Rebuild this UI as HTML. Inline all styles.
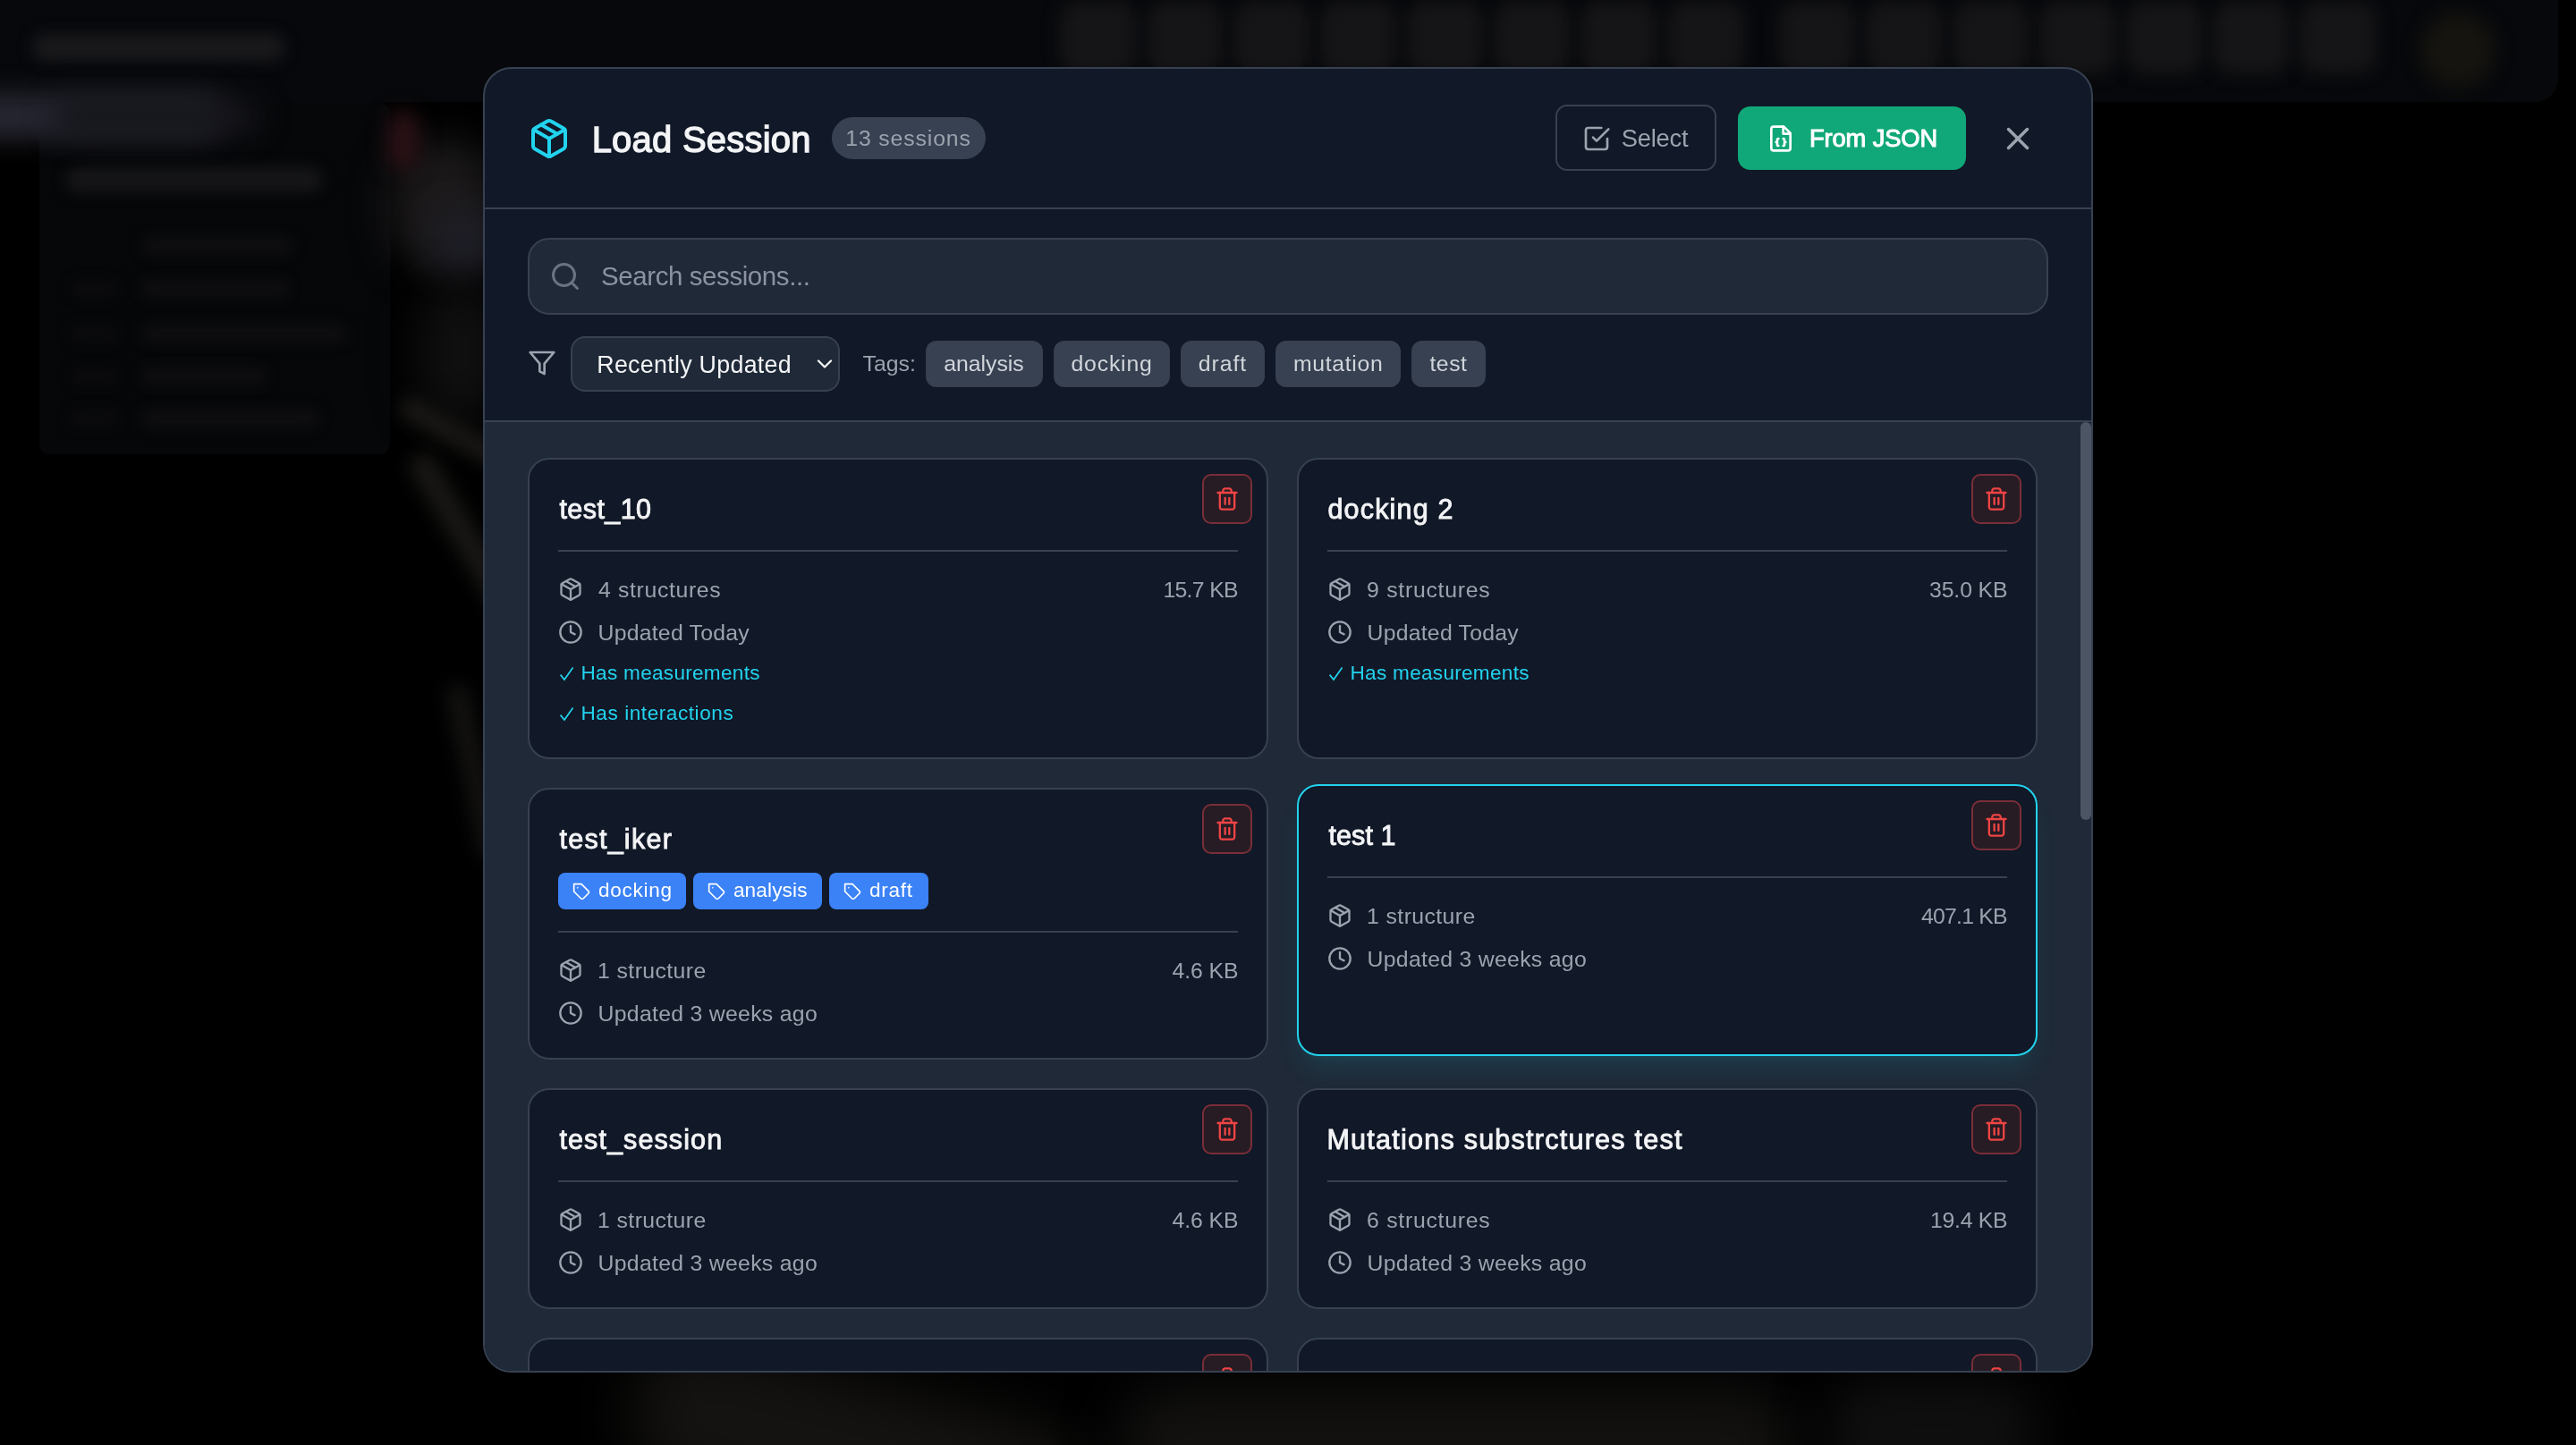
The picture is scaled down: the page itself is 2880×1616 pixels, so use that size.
<!DOCTYPE html><html lang="en"><head><meta charset="utf-8"><title>Load Session</title><style>
*{box-sizing:border-box;margin:0;padding:0}
html,body{width:100%;height:100%;background:#000;overflow:hidden}
body{position:relative;font-family:"Liberation Sans",sans-serif;-webkit-font-smoothing:antialiased}
#stage{position:absolute;left:0;top:0;width:2880px;height:1616px;overflow:hidden;background:#000;transform-origin:0 0;transform:scale(var(--s,1));opacity:.9999}
.t{position:absolute;white-space:pre;line-height:1;font-family:"Liberation Sans",sans-serif}
.ic{position:absolute;display:block;overflow:visible}
.bg{position:absolute;left:0;top:0;width:2880px;height:1616px;overflow:hidden}
.bg div{position:absolute}
.modal{position:absolute;left:540px;top:75px;width:1800px;height:1460px;border:2px solid #374151;border-radius:32px;background:#111827;overflow:hidden}
.hline{position:absolute;left:0;width:1796px;height:2px;background:#374151}
.badge{position:absolute;background:#374151;border-radius:24px}
.btn-select{position:absolute;border:2px solid #374151;border-radius:13px}
.btn-json{position:absolute;background:#10a878;border-radius:14px}
.search{position:absolute;background:#1f2937;border:2px solid #374151;border-radius:24px}
.select{position:absolute;background:#1f2937;border:2px solid #374151;border-radius:16px}
.ftag{position:absolute;background:#374151;border-radius:12px;height:52px;top:304px}
.list{position:absolute;left:0;top:395px;width:1796px;height:1061px;background:#1f2937;overflow:hidden}
.card{position:absolute;width:828px;border:2px solid #374151;border-radius:24px;background:#111827}
.card.sel{border-color:#22d3ee;box-shadow:0 20px 30px -6px rgba(34,211,238,.1),0 8px 12px -8px rgba(34,211,238,.1)}
.card .hr{position:absolute;left:32px;width:760px;height:2px;background:#374151}
.del{position:absolute;width:56px;height:56px;border:2px solid #7a2e38;border-radius:10px;background:#271c24}
.chip{position:absolute;height:41px;background:#3b82f6;border-radius:8px}
.thumb{position:absolute;left:1784px;top:395px;width:12px;height:445px;border-radius:6px;background:#4b5563}
</style></head><body><div id="stage"><div class="bg"><div style="left:0px;top:0px;width:2860px;height:114px;background:#07080b;border-radius:0 0 26px 0"></div><div style="left:1185px;top:2px;width:86px;height:80px;background:#151517;border-radius:20px;filter:blur(9px)"></div><div style="left:1282px;top:2px;width:86px;height:80px;background:#151517;border-radius:20px;filter:blur(9px)"></div><div style="left:1379px;top:2px;width:86px;height:80px;background:#151517;border-radius:20px;filter:blur(9px)"></div><div style="left:1476px;top:2px;width:86px;height:80px;background:#151517;border-radius:20px;filter:blur(9px)"></div><div style="left:1573px;top:2px;width:86px;height:80px;background:#151517;border-radius:20px;filter:blur(9px)"></div><div style="left:1670px;top:2px;width:86px;height:80px;background:#151517;border-radius:20px;filter:blur(9px)"></div><div style="left:1767px;top:2px;width:86px;height:80px;background:#151517;border-radius:20px;filter:blur(9px)"></div><div style="left:1864px;top:2px;width:86px;height:80px;background:#151517;border-radius:20px;filter:blur(9px)"></div><div style="left:1989px;top:2px;width:86px;height:80px;background:#151517;border-radius:20px;filter:blur(9px)"></div><div style="left:2086px;top:2px;width:86px;height:80px;background:#151517;border-radius:20px;filter:blur(9px)"></div><div style="left:2183px;top:2px;width:86px;height:80px;background:#151517;border-radius:20px;filter:blur(9px)"></div><div style="left:2280px;top:2px;width:86px;height:80px;background:#151517;border-radius:20px;filter:blur(9px)"></div><div style="left:2377px;top:2px;width:86px;height:80px;background:#151517;border-radius:20px;filter:blur(9px)"></div><div style="left:2474px;top:2px;width:86px;height:80px;background:#151517;border-radius:20px;filter:blur(9px)"></div><div style="left:2571px;top:2px;width:86px;height:80px;background:#151517;border-radius:20px;filter:blur(9px)"></div><div style="left:2706px;top:14px;width:84px;height:84px;background:#15140f;border-radius:42px;filter:blur(10px)"></div><div style="left:36px;top:38px;width:282px;height:30px;background:#19191c;border-radius:15px;filter:blur(8px)"></div><div style="left:44px;top:114px;width:392px;height:394px;background:#060709;border-radius:12px"></div><div style="left:-80px;top:104px;width:330px;height:52px;background:#262631;border-radius:26px;filter:blur(14px)"></div><div style="left:60px;top:108px;width:230px;height:44px;background:#15151b;border-radius:22px;filter:blur(16px)"></div><div style="left:74px;top:188px;width:286px;height:26px;background:#17171a;border-radius:13px;filter:blur(8px)"></div><div style="left:158px;top:265px;width:170px;height:20px;background:#0e0e10;border-radius:10px;filter:blur(7px)"></div><div style="left:158px;top:313px;width:165px;height:20px;background:#0e0e10;border-radius:10px;filter:blur(7px)"></div><div style="left:78px;top:314px;width:54px;height:18px;background:#0b0b0d;border-radius:9px;filter:blur(7px)"></div><div style="left:158px;top:363px;width:230px;height:20px;background:#0e0e10;border-radius:10px;filter:blur(7px)"></div><div style="left:78px;top:364px;width:54px;height:18px;background:#0b0b0d;border-radius:9px;filter:blur(7px)"></div><div style="left:158px;top:411px;width:140px;height:20px;background:#0e0e10;border-radius:10px;filter:blur(7px)"></div><div style="left:78px;top:412px;width:54px;height:18px;background:#0b0b0d;border-radius:9px;filter:blur(7px)"></div><div style="left:158px;top:458px;width:200px;height:20px;background:#0e0e10;border-radius:10px;filter:blur(7px)"></div><div style="left:78px;top:459px;width:54px;height:18px;background:#0b0b0d;border-radius:9px;filter:blur(7px)"></div><div style="left:436px;top:156px;width:120px;height:150px;background:#1b191a;border-radius:60px;filter:blur(22px)"></div><div style="left:434px;top:124px;width:34px;height:66px;background:#2c1217;border-radius:17px;filter:blur(11px)"></div><div style="left:486px;top:236px;width:70px;height:70px;background:#20202a;border-radius:35px;filter:blur(20px)"></div><div style="left:470px;top:320px;width:90px;height:150px;background:#111011;border-radius:45px;filter:blur(26px)"></div><div style="left:440px;top:470px;width:130px;height:26px;background:#171614;border-radius:13px;filter:blur(9px);transform:rotate(30deg)"></div><div style="left:400px;top:610px;width:270px;height:30px;background:#181715;border-radius:15px;filter:blur(10px);transform:rotate(59deg)"></div><div style="left:430px;top:850px;width:200px;height:26px;background:#131211;border-radius:13px;filter:blur(10px);transform:rotate(78deg)"></div><div style="left:700px;top:1545px;width:520px;height:160px;background:#141311;border-radius:80px;filter:blur(34px);transform:rotate(14deg)"></div><div style="left:1250px;top:1550px;width:760px;height:130px;background:#121110;border-radius:65px;filter:blur(30px)"></div><div style="left:2040px;top:1545px;width:240px;height:110px;background:#100f0f;border-radius:55px;filter:blur(28px)"></div></div><div class="modal"><svg class="ic" style="left:48px;top:53.5px;color:#22d3ee" width="48" height="48" viewBox="0 0 24 24" fill="none" stroke="currentColor" stroke-width="2" stroke-linecap="round" stroke-linejoin="round"><path d="m7.5 4.27 9 5.15"/><path d="M21 8a2 2 0 0 0-1-1.73l-7-4a2 2 0 0 0-2 0l-7 4A2 2 0 0 0 3 8v8a2 2 0 0 0 1 1.73l7 4a2 2 0 0 0 2 0l7-4A2 2 0 0 0 21 16Z"/><path d="m3.3 7 8.7 5 8.7-5"/><path d="M12 22V12"/></svg><span class="t" style="left:119.65px;top:59.44px;font-size:40px;color:#f3f4f6;-webkit-text-stroke:1.3px #f3f4f6;letter-spacing:0.231px">Load Session</span><div class="badge" style="left:388px;top:54px;width:172px;height:47px"></div><span class="t" style="left:403.25px;top:65.71px;font-size:24.8px;color:#9ca3af;letter-spacing:0.870px">13 sessions</span><div class="btn-select" style="left:1197px;top:40px;width:180px;height:74px"></div><svg class="ic" style="left:1226.6px;top:61.599999999999994px;color:#9ca3af" width="32" height="32" viewBox="0 0 24 24" fill="none" stroke="currentColor" stroke-width="2" stroke-linecap="round" stroke-linejoin="round"><path d="m9 11 3 3L22 4"/><path d="M21 12v7a2 2 0 0 1-2 2H5a2 2 0 0 1-2-2V5a2 2 0 0 1 2-2h11"/></svg><span class="t" style="left:1270.75px;top:64.14px;font-size:27.3px;color:#9ca3af;letter-spacing:-0.206px">Select</span><div class="btn-json" style="left:1401px;top:42px;width:255px;height:71px"></div><svg class="ic" style="left:1432.75px;top:61.69999999999999px;color:#fff" width="32" height="32" viewBox="0 0 24 24" fill="none" stroke="currentColor" stroke-width="2" stroke-linecap="round" stroke-linejoin="round"><path d="M14.5 2H6a2 2 0 0 0-2 2v16a2 2 0 0 0 2 2h12a2 2 0 0 0 2-2V7.5L14.5 2z"/><polyline points="14 2 14 8 20 8"/><path d="M10 12a1 1 0 0 0-1 1v1a1 1 0 0 1-1 1 1 1 0 0 1 1 1v1a1 1 0 0 0 1 1"/><path d="M14 18a1 1 0 0 0 1-1v-1a1 1 0 0 1 1-1 1 1 0 0 1-1-1v-1a1 1 0 0 0-1-1"/></svg><span class="t" style="left:1481.00px;top:64.14px;font-size:27.3px;color:#fff;-webkit-text-stroke:1.0px #fff;letter-spacing:-0.107px">From JSON</span><svg class="ic" style="left:1693px;top:57px;color:#9ca3af" width="42" height="42" viewBox="0 0 24 24" fill="none" stroke="currentColor" stroke-width="2" stroke-linecap="round" stroke-linejoin="round"><path d="M18 6 6 18"/><path d="m6 6 12 12"/></svg><div class="hline" style="top:155px"></div><div class="search" style="left:48px;top:189px;width:1700px;height:86px"></div><svg class="ic" style="left:72px;top:213.75px;color:#6b7280" width="36" height="36" viewBox="0 0 24 24" fill="none" stroke="currentColor" stroke-width="2" stroke-linecap="round" stroke-linejoin="round"><circle cx="11" cy="11" r="8"/><path d="m21 21-4.3-4.3"/></svg><span class="t" style="left:130.00px;top:216.78px;font-size:29.5px;color:#8b92a0;letter-spacing:-0.417px">Search sessions...</span><svg class="ic" style="left:48px;top:313px;color:#9ca3af" width="32" height="32" viewBox="0 0 24 24" fill="none" stroke="currentColor" stroke-width="2" stroke-linecap="round" stroke-linejoin="round"><polygon points="22 3 2 3 10 12.46 10 19 14 21 14 12.46 22 3"/></svg><div class="select" style="left:96px;top:299px;width:301px;height:62px"></div><span class="t" style="left:125.25px;top:317.61px;font-size:26.8px;color:#f3f4f6;letter-spacing:0.293px">Recently Updated</span><svg class="ic" style="left:365.9px;top:316.25px;color:#f3f4f6" width="28" height="28" viewBox="0 0 24 24" fill="none" stroke="currentColor" stroke-width="2" stroke-linecap="round" stroke-linejoin="round"><path d="m6 9 6 6 6-6"/></svg><span class="t" style="left:422.50px;top:317.51px;font-size:24.8px;color:#9ca3af;letter-spacing:0.030px">Tags:</span><div class="ftag" style="left:493px;width:131px"></div><span class="t" style="left:513.25px;top:317.51px;font-size:24.8px;color:#d1d5db;letter-spacing:-0.027px">analysis</span><div class="ftag" style="left:636px;width:130px"></div><span class="t" style="left:655.50px;top:317.51px;font-size:24.8px;color:#d1d5db;letter-spacing:0.804px">docking</span><div class="ftag" style="left:778px;width:94px"></div><span class="t" style="left:797.75px;top:317.51px;font-size:24.8px;color:#d1d5db;letter-spacing:0.943px">draft</span><div class="ftag" style="left:884px;width:140px"></div><span class="t" style="left:904.00px;top:317.51px;font-size:24.8px;color:#d1d5db;letter-spacing:0.669px">mutation</span><div class="ftag" style="left:1036px;width:83px"></div><span class="t" style="left:1056.50px;top:317.51px;font-size:24.8px;color:#d1d5db;letter-spacing:0.474px">test</span><div class="hline" style="top:393px"></div><div class="list"><div class="card" style="left:48px;top:40px;height:337px"><span class="t" style="left:33.45px;top:40.38px;font-size:30.5px;color:#f3f4f6;-webkit-text-stroke:0.9px #f3f4f6;letter-spacing:0.419px">test_10</span><div class="del" style="left:752px;top:16px"><svg class="ic" style="left:12px;top:12px;color:#ef4444" width="28" height="28" viewBox="0 0 24 24" fill="none" stroke="currentColor" stroke-width="2" stroke-linecap="round" stroke-linejoin="round"><path d="M3 6h18"/><path d="M19 6v14c0 1-1 2-2 2H7c-1 0-2-1-2-2V6"/><path d="M8 6V4c0-1 1-2 2-2h4c1 0 2 1 2 2v2"/><line x1="10" x2="10" y1="11" y2="17"/><line x1="14" x2="14" y1="11" y2="17"/></svg></div><div class="hr" style="top:101px"></div><svg class="ic" style="left:32px;top:131px;color:#9ca3af" width="28" height="28" viewBox="0 0 24 24" fill="none" stroke="currentColor" stroke-width="2" stroke-linecap="round" stroke-linejoin="round"><path d="m7.5 4.27 9 5.15"/><path d="M21 8a2 2 0 0 0-1-1.73l-7-4a2 2 0 0 0-2 0l-7 4A2 2 0 0 0 3 8v8a2 2 0 0 0 1 1.73l7 4a2 2 0 0 0 2 0l7-4A2 2 0 0 0 21 16Z"/><path d="m3.3 7 8.7 5 8.7-5"/><path d="M12 22V12"/></svg><span class="t" style="left:77.00px;top:133.51px;font-size:24.8px;color:#9ca3af;letter-spacing:0.651px">4 structures</span><span class="t" style="left:708.40px;top:133.51px;font-size:24.8px;color:#9ca3af;letter-spacing:-0.682px">15.7 KB</span><svg class="ic" style="left:32px;top:179px;color:#9ca3af" width="28" height="28" viewBox="0 0 24 24" fill="none" stroke="currentColor" stroke-width="2" stroke-linecap="round" stroke-linejoin="round"><circle cx="12" cy="12" r="10"/><polyline points="12 6 12 12 16 14"/></svg><span class="t" style="left:76.50px;top:181.51px;font-size:24.8px;color:#9ca3af;letter-spacing:0.241px">Updated Today</span><svg class="ic" style="left:34px;top:232.3px;color:#22d3ee" width="16" height="16" viewBox="0 0 16 16" fill="none" stroke="currentColor" stroke-width="1.7" stroke-linecap="butt" stroke-linejoin="miter"><path d="M0.6 8.6 L5 14 L14.6 0.6"/></svg><span class="t" style="left:57.50px;top:227.67px;font-size:22.6px;color:#22d3ee;letter-spacing:0.274px">Has measurements</span><svg class="ic" style="left:34px;top:277.3px;color:#22d3ee" width="16" height="16" viewBox="0 0 16 16" fill="none" stroke="currentColor" stroke-width="1.7" stroke-linecap="butt" stroke-linejoin="miter"><path d="M0.6 8.6 L5 14 L14.6 0.6"/></svg><span class="t" style="left:57.50px;top:272.67px;font-size:22.6px;color:#22d3ee;letter-spacing:0.547px">Has interactions</span></div><div class="card" style="left:908px;top:40px;height:337px"><span class="t" style="left:32.45px;top:40.38px;font-size:30.5px;color:#f3f4f6;-webkit-text-stroke:0.9px #f3f4f6;letter-spacing:1.175px">docking 2</span><div class="del" style="left:752px;top:16px"><svg class="ic" style="left:12px;top:12px;color:#ef4444" width="28" height="28" viewBox="0 0 24 24" fill="none" stroke="currentColor" stroke-width="2" stroke-linecap="round" stroke-linejoin="round"><path d="M3 6h18"/><path d="M19 6v14c0 1-1 2-2 2H7c-1 0-2-1-2-2V6"/><path d="M8 6V4c0-1 1-2 2-2h4c1 0 2 1 2 2v2"/><line x1="10" x2="10" y1="11" y2="17"/><line x1="14" x2="14" y1="11" y2="17"/></svg></div><div class="hr" style="top:101px"></div><svg class="ic" style="left:32px;top:131px;color:#9ca3af" width="28" height="28" viewBox="0 0 24 24" fill="none" stroke="currentColor" stroke-width="2" stroke-linecap="round" stroke-linejoin="round"><path d="m7.5 4.27 9 5.15"/><path d="M21 8a2 2 0 0 0-1-1.73l-7-4a2 2 0 0 0-2 0l-7 4A2 2 0 0 0 3 8v8a2 2 0 0 0 1 1.73l7 4a2 2 0 0 0 2 0l7-4A2 2 0 0 0 21 16Z"/><path d="m3.3 7 8.7 5 8.7-5"/><path d="M12 22V12"/></svg><span class="t" style="left:76.00px;top:133.51px;font-size:24.8px;color:#9ca3af;letter-spacing:0.742px">9 structures</span><span class="t" style="left:705.00px;top:133.51px;font-size:24.8px;color:#9ca3af;letter-spacing:-0.115px">35.0 KB</span><svg class="ic" style="left:32px;top:179px;color:#9ca3af" width="28" height="28" viewBox="0 0 24 24" fill="none" stroke="currentColor" stroke-width="2" stroke-linecap="round" stroke-linejoin="round"><circle cx="12" cy="12" r="10"/><polyline points="12 6 12 12 16 14"/></svg><span class="t" style="left:76.50px;top:181.51px;font-size:24.8px;color:#9ca3af;letter-spacing:0.241px">Updated Today</span><svg class="ic" style="left:34px;top:232.3px;color:#22d3ee" width="16" height="16" viewBox="0 0 16 16" fill="none" stroke="currentColor" stroke-width="1.7" stroke-linecap="butt" stroke-linejoin="miter"><path d="M0.6 8.6 L5 14 L14.6 0.6"/></svg><span class="t" style="left:57.50px;top:227.67px;font-size:22.6px;color:#22d3ee;letter-spacing:0.274px">Has measurements</span></div><div class="card" style="left:48px;top:409px;height:304px"><span class="t" style="left:33.45px;top:40.38px;font-size:30.5px;color:#f3f4f6;-webkit-text-stroke:0.9px #f3f4f6;letter-spacing:1.261px">test_iker</span><div class="del" style="left:752px;top:16px"><svg class="ic" style="left:12px;top:12px;color:#ef4444" width="28" height="28" viewBox="0 0 24 24" fill="none" stroke="currentColor" stroke-width="2" stroke-linecap="round" stroke-linejoin="round"><path d="M3 6h18"/><path d="M19 6v14c0 1-1 2-2 2H7c-1 0-2-1-2-2V6"/><path d="M8 6V4c0-1 1-2 2-2h4c1 0 2 1 2 2v2"/><line x1="10" x2="10" y1="11" y2="17"/><line x1="14" x2="14" y1="11" y2="17"/></svg></div><div class="chip" style="left:32px;top:93px;width:143px"><svg class="ic" style="left:15.5px;top:10.5px;color:#fff" width="20" height="20" viewBox="0 0 24 24" fill="none" stroke="currentColor" stroke-width="2" stroke-linecap="round" stroke-linejoin="round"><path d="M12 2H2v10l9.29 9.29c.94.94 2.48.94 3.42 0l6.58-6.58c.94-.94.94-2.48 0-3.42L12 2Z"/><path d="M7 7h.01"/></svg></div><span class="t" style="left:76.90px;top:101.77px;font-size:22.6px;color:#fff;letter-spacing:0.698px">docking</span><div class="chip" style="left:183px;top:93px;width:144px"><svg class="ic" style="left:15.5px;top:10.5px;color:#fff" width="20" height="20" viewBox="0 0 24 24" fill="none" stroke="currentColor" stroke-width="2" stroke-linecap="round" stroke-linejoin="round"><path d="M12 2H2v10l9.29 9.29c.94.94 2.48.94 3.42 0l6.58-6.58c.94-.94.94-2.48 0-3.42L12 2Z"/><path d="M7 7h.01"/></svg></div><span class="t" style="left:227.90px;top:101.77px;font-size:22.6px;color:#fff;letter-spacing:0.139px">analysis</span><div class="chip" style="left:335px;top:93px;width:111px"><svg class="ic" style="left:15.5px;top:10.5px;color:#fff" width="20" height="20" viewBox="0 0 24 24" fill="none" stroke="currentColor" stroke-width="2" stroke-linecap="round" stroke-linejoin="round"><path d="M12 2H2v10l9.29 9.29c.94.94 2.48.94 3.42 0l6.58-6.58c.94-.94.94-2.48 0-3.42L12 2Z"/><path d="M7 7h.01"/></svg></div><span class="t" style="left:379.90px;top:101.77px;font-size:22.6px;color:#fff;letter-spacing:0.742px">draft</span><div class="hr" style="top:158px"></div><svg class="ic" style="left:32px;top:188px;color:#9ca3af" width="28" height="28" viewBox="0 0 24 24" fill="none" stroke="currentColor" stroke-width="2" stroke-linecap="round" stroke-linejoin="round"><path d="m7.5 4.27 9 5.15"/><path d="M21 8a2 2 0 0 0-1-1.73l-7-4a2 2 0 0 0-2 0l-7 4A2 2 0 0 0 3 8v8a2 2 0 0 0 1 1.73l7 4a2 2 0 0 0 2 0l7-4A2 2 0 0 0 21 16Z"/><path d="m3.3 7 8.7 5 8.7-5"/><path d="M12 22V12"/></svg><span class="t" style="left:76.00px;top:190.51px;font-size:24.8px;color:#9ca3af;letter-spacing:0.415px">1 structure</span><span class="t" style="left:718.50px;top:190.51px;font-size:24.8px;color:#9ca3af;letter-spacing:-0.080px">4.6 KB</span><svg class="ic" style="left:32px;top:236px;color:#9ca3af" width="28" height="28" viewBox="0 0 24 24" fill="none" stroke="currentColor" stroke-width="2" stroke-linecap="round" stroke-linejoin="round"><circle cx="12" cy="12" r="10"/><polyline points="12 6 12 12 16 14"/></svg><span class="t" style="left:76.50px;top:238.51px;font-size:24.8px;color:#9ca3af;letter-spacing:0.296px">Updated 3 weeks ago</span></div><div class="card sel" style="left:908px;top:405px;height:304px"><span class="t" style="left:33.45px;top:40.38px;font-size:30.5px;color:#f3f4f6;-webkit-text-stroke:0.9px #f3f4f6;letter-spacing:0.093px">test 1</span><div class="del" style="left:752px;top:16px"><svg class="ic" style="left:12px;top:12px;color:#ef4444" width="28" height="28" viewBox="0 0 24 24" fill="none" stroke="currentColor" stroke-width="2" stroke-linecap="round" stroke-linejoin="round"><path d="M3 6h18"/><path d="M19 6v14c0 1-1 2-2 2H7c-1 0-2-1-2-2V6"/><path d="M8 6V4c0-1 1-2 2-2h4c1 0 2 1 2 2v2"/><line x1="10" x2="10" y1="11" y2="17"/><line x1="14" x2="14" y1="11" y2="17"/></svg></div><div class="hr" style="top:101px"></div><svg class="ic" style="left:32px;top:131px;color:#9ca3af" width="28" height="28" viewBox="0 0 24 24" fill="none" stroke="currentColor" stroke-width="2" stroke-linecap="round" stroke-linejoin="round"><path d="m7.5 4.27 9 5.15"/><path d="M21 8a2 2 0 0 0-1-1.73l-7-4a2 2 0 0 0-2 0l-7 4A2 2 0 0 0 3 8v8a2 2 0 0 0 1 1.73l7 4a2 2 0 0 0 2 0l7-4A2 2 0 0 0 21 16Z"/><path d="m3.3 7 8.7 5 8.7-5"/><path d="M12 22V12"/></svg><span class="t" style="left:76.00px;top:133.51px;font-size:24.8px;color:#9ca3af;letter-spacing:0.415px">1 structure</span><span class="t" style="left:696.00px;top:133.51px;font-size:24.8px;color:#9ca3af;letter-spacing:-0.783px">407.1 KB</span><svg class="ic" style="left:32px;top:179px;color:#9ca3af" width="28" height="28" viewBox="0 0 24 24" fill="none" stroke="currentColor" stroke-width="2" stroke-linecap="round" stroke-linejoin="round"><circle cx="12" cy="12" r="10"/><polyline points="12 6 12 12 16 14"/></svg><span class="t" style="left:76.50px;top:181.51px;font-size:24.8px;color:#9ca3af;letter-spacing:0.296px">Updated 3 weeks ago</span></div><div class="card" style="left:48px;top:745px;height:247px"><span class="t" style="left:33.45px;top:40.38px;font-size:30.5px;color:#f3f4f6;-webkit-text-stroke:0.9px #f3f4f6;letter-spacing:1.102px">test_session</span><div class="del" style="left:752px;top:16px"><svg class="ic" style="left:12px;top:12px;color:#ef4444" width="28" height="28" viewBox="0 0 24 24" fill="none" stroke="currentColor" stroke-width="2" stroke-linecap="round" stroke-linejoin="round"><path d="M3 6h18"/><path d="M19 6v14c0 1-1 2-2 2H7c-1 0-2-1-2-2V6"/><path d="M8 6V4c0-1 1-2 2-2h4c1 0 2 1 2 2v2"/><line x1="10" x2="10" y1="11" y2="17"/><line x1="14" x2="14" y1="11" y2="17"/></svg></div><div class="hr" style="top:101px"></div><svg class="ic" style="left:32px;top:131px;color:#9ca3af" width="28" height="28" viewBox="0 0 24 24" fill="none" stroke="currentColor" stroke-width="2" stroke-linecap="round" stroke-linejoin="round"><path d="m7.5 4.27 9 5.15"/><path d="M21 8a2 2 0 0 0-1-1.73l-7-4a2 2 0 0 0-2 0l-7 4A2 2 0 0 0 3 8v8a2 2 0 0 0 1 1.73l7 4a2 2 0 0 0 2 0l7-4A2 2 0 0 0 21 16Z"/><path d="m3.3 7 8.7 5 8.7-5"/><path d="M12 22V12"/></svg><span class="t" style="left:76.00px;top:133.51px;font-size:24.8px;color:#9ca3af;letter-spacing:0.415px">1 structure</span><span class="t" style="left:718.50px;top:133.51px;font-size:24.8px;color:#9ca3af;letter-spacing:-0.080px">4.6 KB</span><svg class="ic" style="left:32px;top:179px;color:#9ca3af" width="28" height="28" viewBox="0 0 24 24" fill="none" stroke="currentColor" stroke-width="2" stroke-linecap="round" stroke-linejoin="round"><circle cx="12" cy="12" r="10"/><polyline points="12 6 12 12 16 14"/></svg><span class="t" style="left:76.50px;top:181.51px;font-size:24.8px;color:#9ca3af;letter-spacing:0.296px">Updated 3 weeks ago</span></div><div class="card" style="left:908px;top:745px;height:247px"><span class="t" style="left:31.45px;top:40.38px;font-size:30.5px;color:#f3f4f6;-webkit-text-stroke:0.9px #f3f4f6;letter-spacing:1.251px">Mutations substrctures test</span><div class="del" style="left:752px;top:16px"><svg class="ic" style="left:12px;top:12px;color:#ef4444" width="28" height="28" viewBox="0 0 24 24" fill="none" stroke="currentColor" stroke-width="2" stroke-linecap="round" stroke-linejoin="round"><path d="M3 6h18"/><path d="M19 6v14c0 1-1 2-2 2H7c-1 0-2-1-2-2V6"/><path d="M8 6V4c0-1 1-2 2-2h4c1 0 2 1 2 2v2"/><line x1="10" x2="10" y1="11" y2="17"/><line x1="14" x2="14" y1="11" y2="17"/></svg></div><div class="hr" style="top:101px"></div><svg class="ic" style="left:32px;top:131px;color:#9ca3af" width="28" height="28" viewBox="0 0 24 24" fill="none" stroke="currentColor" stroke-width="2" stroke-linecap="round" stroke-linejoin="round"><path d="m7.5 4.27 9 5.15"/><path d="M21 8a2 2 0 0 0-1-1.73l-7-4a2 2 0 0 0-2 0l-7 4A2 2 0 0 0 3 8v8a2 2 0 0 0 1 1.73l7 4a2 2 0 0 0 2 0l7-4A2 2 0 0 0 21 16Z"/><path d="m3.3 7 8.7 5 8.7-5"/><path d="M12 22V12"/></svg><span class="t" style="left:76.00px;top:133.51px;font-size:24.8px;color:#9ca3af;letter-spacing:0.742px">6 structures</span><span class="t" style="left:706.10px;top:133.51px;font-size:24.8px;color:#9ca3af;letter-spacing:-0.298px">19.4 KB</span><svg class="ic" style="left:32px;top:179px;color:#9ca3af" width="28" height="28" viewBox="0 0 24 24" fill="none" stroke="currentColor" stroke-width="2" stroke-linecap="round" stroke-linejoin="round"><circle cx="12" cy="12" r="10"/><polyline points="12 6 12 12 16 14"/></svg><span class="t" style="left:76.50px;top:181.51px;font-size:24.8px;color:#9ca3af;letter-spacing:0.296px">Updated 3 weeks ago</span></div><div class="card" style="left:48px;top:1024px;height:247px"><span class="t" style="left:32.45px;top:40.38px;font-size:30.5px;color:#f3f4f6;-webkit-text-stroke:0.9px #f3f4f6">docking test</span><div class="del" style="left:752px;top:16px"><svg class="ic" style="left:12px;top:12px;color:#ef4444" width="28" height="28" viewBox="0 0 24 24" fill="none" stroke="currentColor" stroke-width="2" stroke-linecap="round" stroke-linejoin="round"><path d="M3 6h18"/><path d="M19 6v14c0 1-1 2-2 2H7c-1 0-2-1-2-2V6"/><path d="M8 6V4c0-1 1-2 2-2h4c1 0 2 1 2 2v2"/><line x1="10" x2="10" y1="11" y2="17"/><line x1="14" x2="14" y1="11" y2="17"/></svg></div><div class="hr" style="top:101px"></div><svg class="ic" style="left:32px;top:131px;color:#9ca3af" width="28" height="28" viewBox="0 0 24 24" fill="none" stroke="currentColor" stroke-width="2" stroke-linecap="round" stroke-linejoin="round"><path d="m7.5 4.27 9 5.15"/><path d="M21 8a2 2 0 0 0-1-1.73l-7-4a2 2 0 0 0-2 0l-7 4A2 2 0 0 0 3 8v8a2 2 0 0 0 1 1.73l7 4a2 2 0 0 0 2 0l7-4A2 2 0 0 0 21 16Z"/><path d="m3.3 7 8.7 5 8.7-5"/><path d="M12 22V12"/></svg><span class="t" style="left:77.00px;top:133.51px;font-size:24.8px;color:#9ca3af">3 structures</span><span class="t" style="left:704.31px;top:133.51px;font-size:24.8px;color:#9ca3af">12.1 KB</span><svg class="ic" style="left:32px;top:179px;color:#9ca3af" width="28" height="28" viewBox="0 0 24 24" fill="none" stroke="currentColor" stroke-width="2" stroke-linecap="round" stroke-linejoin="round"><circle cx="12" cy="12" r="10"/><polyline points="12 6 12 12 16 14"/></svg><span class="t" style="left:76.50px;top:181.51px;font-size:24.8px;color:#9ca3af">Updated 3 weeks ago</span></div><div class="card" style="left:908px;top:1024px;height:247px"><span class="t" style="left:33.45px;top:40.38px;font-size:30.5px;color:#f3f4f6;-webkit-text-stroke:0.9px #f3f4f6">session_2</span><div class="del" style="left:752px;top:16px"><svg class="ic" style="left:12px;top:12px;color:#ef4444" width="28" height="28" viewBox="0 0 24 24" fill="none" stroke="currentColor" stroke-width="2" stroke-linecap="round" stroke-linejoin="round"><path d="M3 6h18"/><path d="M19 6v14c0 1-1 2-2 2H7c-1 0-2-1-2-2V6"/><path d="M8 6V4c0-1 1-2 2-2h4c1 0 2 1 2 2v2"/><line x1="10" x2="10" y1="11" y2="17"/><line x1="14" x2="14" y1="11" y2="17"/></svg></div><div class="hr" style="top:101px"></div><svg class="ic" style="left:32px;top:131px;color:#9ca3af" width="28" height="28" viewBox="0 0 24 24" fill="none" stroke="currentColor" stroke-width="2" stroke-linecap="round" stroke-linejoin="round"><path d="m7.5 4.27 9 5.15"/><path d="M21 8a2 2 0 0 0-1-1.73l-7-4a2 2 0 0 0-2 0l-7 4A2 2 0 0 0 3 8v8a2 2 0 0 0 1 1.73l7 4a2 2 0 0 0 2 0l7-4A2 2 0 0 0 21 16Z"/><path d="m3.3 7 8.7 5 8.7-5"/><path d="M12 22V12"/></svg><span class="t" style="left:76.00px;top:133.51px;font-size:24.8px;color:#9ca3af">2 structures</span><span class="t" style="left:718.10px;top:133.51px;font-size:24.8px;color:#9ca3af">8.3 KB</span><svg class="ic" style="left:32px;top:179px;color:#9ca3af" width="28" height="28" viewBox="0 0 24 24" fill="none" stroke="currentColor" stroke-width="2" stroke-linecap="round" stroke-linejoin="round"><circle cx="12" cy="12" r="10"/><polyline points="12 6 12 12 16 14"/></svg><span class="t" style="left:76.50px;top:181.51px;font-size:24.8px;color:#9ca3af">Updated 3 weeks ago</span></div></div><div class="thumb"></div></div></div><script>(function(){var s=window.innerWidth/2880;if(s>0&&Math.abs(s-1)>0.002){document.documentElement.style.setProperty("--s",s);}})();</script></body></html>
